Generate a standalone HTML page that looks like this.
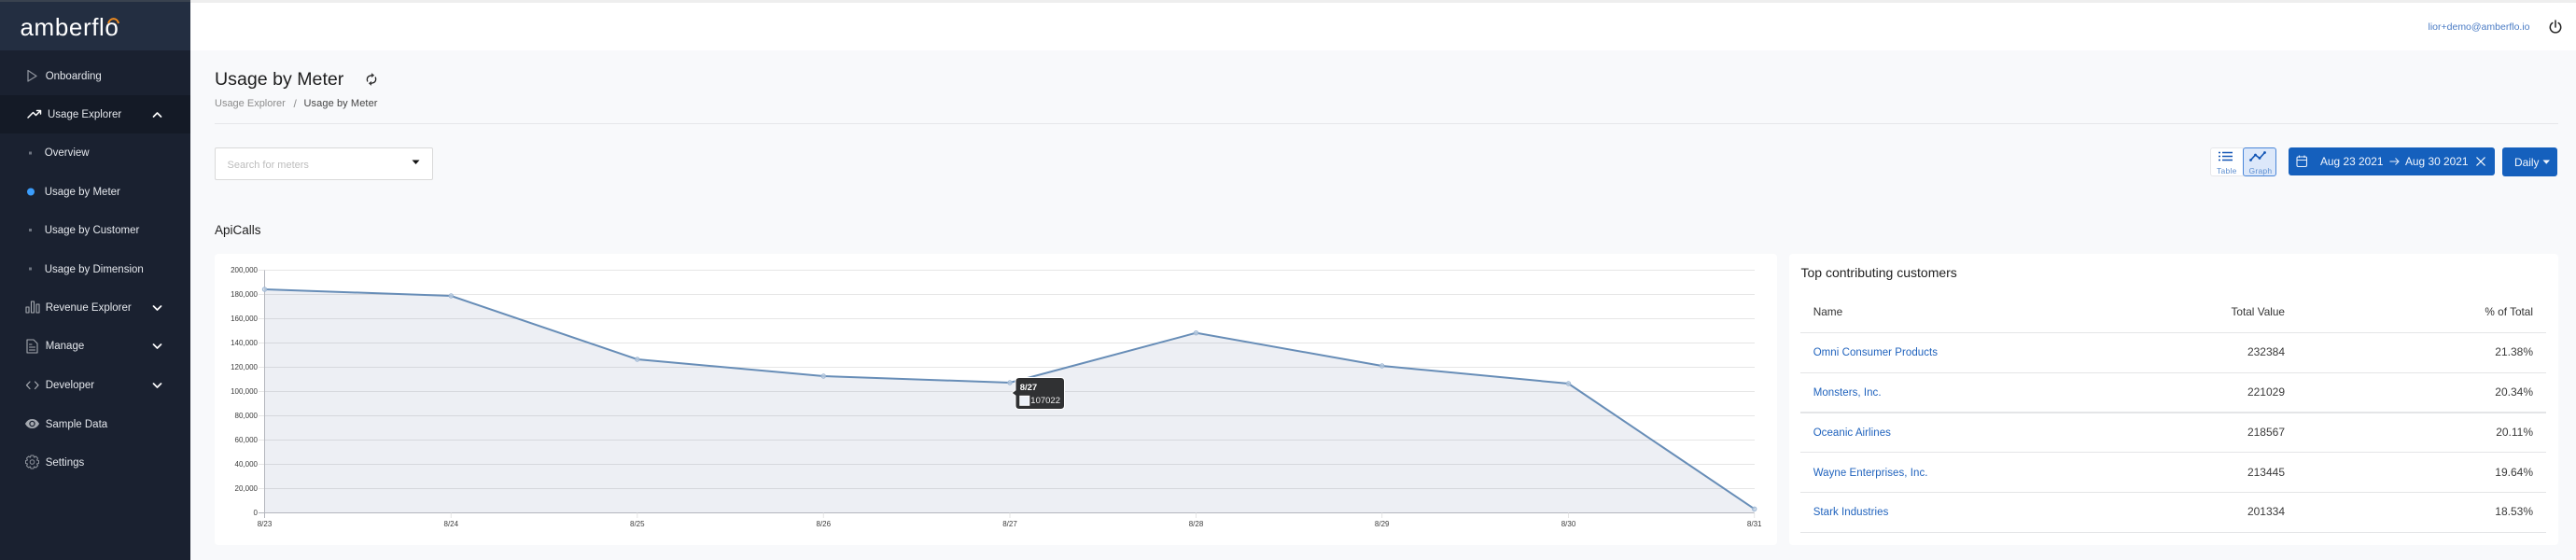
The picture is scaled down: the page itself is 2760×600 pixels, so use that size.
<!DOCTYPE html>
<html lang="en"><head><meta charset="utf-8"><title>Usage by Meter</title>
<style>
*{box-sizing:border-box}
html,body{margin:0;padding:0;width:2760px;height:600px;overflow:hidden;background:#f8f9fb;font-family:"Liberation Sans",sans-serif}
.a{position:absolute}
.t{position:absolute;white-space:nowrap;line-height:16px;height:16px}
.nav{font-size:11.5px;color:#e4e7ec;margin-top:1px}
.r{text-align:right}
.lnk{font-size:11.5px;color:#1f62bd;letter-spacing:.05px;margin-top:1px}
.num{font-size:12px;color:#3a3a3a}
.th{font-size:11.8px;color:#333}
.ln{position:absolute;left:1929px;width:799px;height:1px;background:#e4e5e7}
svg{position:absolute;overflow:visible}
</style></head><body>
<div class="a" style="left:204px;top:0;width:2556px;height:54px;background:#fff;border-top:3px solid #eeeeee"></div>
<div class="a" style="left:0;top:0;width:204px;height:600px;background:#1a2130"></div>
<div class="a" style="left:0;top:0;width:204px;height:54px;background:#232e41;border-top:2px solid #39424f"></div>
<div class="a" style="left:0;top:102px;width:204px;height:41px;background:#141a26"></div>

<div class="t" style="left:21.500px;top:14px;height:30px;line-height:30px;font-size:26px;color:#fff;letter-spacing:.6px">amberflo</div>
<svg style="left:0;top:0" width="204" height="54"><path d="M116 25C118 18.500 125.500 18.500 127 25" fill="none" stroke="#f28c1e" stroke-width="2"/></svg>

<svg style="left:0;top:0" width="204" height="600" fill="none" stroke-linejoin="round" stroke-linecap="round">
<path d="M30 75.500L39 81.500L30 87Z" stroke="#8d929b" stroke-width="1.300"/>
<path d="M30 126L35.500 120.500L38.500 123.500L43.500 118.500M39.500 118.500H43.500V122" stroke="#fff" stroke-width="1.500"/>
<path d="M164.500 125L168.500 121L172.500 125" stroke="#fff" stroke-width="1.700"/>
<rect x="31" y="162.500" width="3" height="3" fill="#6d7480"/>
<circle cx="33" cy="205.500" r="4" fill="#3b9dfb"/>
<rect x="31" y="245" width="3" height="3" fill="#6d7480"/>
<rect x="31" y="286.500" width="3" height="3" fill="#6d7480"/>
<g stroke="#a5a9b0" stroke-width="1.100"><rect x="28" y="329" width="3" height="6"/><rect x="33.500" y="323" width="3" height="12"/><rect x="39" y="326" width="3" height="9"/></g>
<path d="M164.500 328L168.500 332L172.500 328M164.500 369L168.500 373L172.500 369M164.500 411L168.500 415L172.500 411" stroke="#fff" stroke-width="1.700"/>
<path d="M29 364H36L40 368V378H29ZM31.500 369H34M31.500 372H37.500M31.500 375H37.500" stroke="#a5a9b0" stroke-width="1.100"/>
<path d="M32 409L28.500 412.700L32 416.500M37.500 409L41 412.700L37.500 416.500" stroke="#a5a9b0" stroke-width="1.200"/>
<path d="M27.500 454C31 448 38 448 41.500 454C38 460 31 460 27.500 454Z" fill="#a5a9b0" stroke="#a5a9b0" stroke-width="1"/>
<circle cx="34.500" cy="454" r="2.600" fill="#a5a9b0" stroke="#1a2130" stroke-width="1.300"/>
<circle cx="34.500" cy="495" r="2.300" stroke="#8d929b" stroke-width="1"/>
<path d="M33 488H36L36.500 490L38.500 489L40.500 491L39.500 493L41.500 493.500V496.500L39.500 497L40.500 499L38.500 501L36.500 500L36 502H33L32.500 500L30.500 501L28.500 499L29.500 497L27.500 496.500V493.500L29.500 493L28.500 491L30.500 489L32.500 490Z" stroke="#8d929b" stroke-width="1"/>
</svg>

<div class="t nav" style="left:48.700px;top:73px">Onboarding</div>
<div class="t nav" style="left:51px;top:114px">Usage Explorer</div>
<div class="t nav" style="left:47.700px;top:155px">Overview</div>
<div class="t nav" style="left:47.700px;top:197px">Usage by Meter</div>
<div class="t nav" style="left:47.700px;top:238px">Usage by Customer</div>
<div class="t nav" style="left:47.700px;top:280px">Usage by Dimension</div>
<div class="t nav" style="left:48.700px;top:321px">Revenue Explorer</div>
<div class="t nav" style="left:48.700px;top:362px">Manage</div>
<div class="t nav" style="left:48.700px;top:404px">Developer</div>
<div class="t nav" style="left:48.700px;top:446px">Sample Data</div>
<div class="t nav" style="left:48.700px;top:487px">Settings</div>

<div class="t" style="left:2601.500px;top:20.500px;font-size:10.500px;color:#4a7bc4">lior+demo@amberflo.io</div>
<svg style="left:2728px;top:18px" width="20" height="20" fill="none" stroke="#222" stroke-width="1.500" stroke-linecap="round"><path d="M10 4V11"/><path d="M6.800 6.500A5.700 5.700 0 1 0 13.200 6.500"/></svg>

<div class="t" style="left:230px;top:73px;height:24px;line-height:24px;font-size:19.600px;color:#1d1d1d">Usage by Meter</div>
<svg style="left:392px;top:78px" width="12" height="14" fill="none" stroke="#222" stroke-width="1.300"><path d="M2 9.500A4.200 4.200 0 0 1 3.500 3.500L7 2.500"/><path d="M10 4.500A4.200 4.200 0 0 1 8.500 10.500L5 11.500"/><path d="M6 .8L8.300 2.700L6 4.500M6 9.500L3.700 11.300L6 13.200" stroke-width="1"/></svg>
<div class="t" style="left:230px;top:103px;font-size:11px;color:#8c8c8c">Usage Explorer</div>
<div class="t" style="left:314.500px;top:103px;font-size:12px;color:#8c8c8c">/</div>
<div class="t" style="left:325.500px;top:103px;font-size:11px;color:#444;letter-spacing:.1px">Usage by Meter</div>
<div class="a" style="left:230px;top:132px;width:2511px;height:1px;background:#e6e7ea"></div>

<div class="a" style="left:230px;top:158px;width:234px;height:35px;background:#fff;border:1px solid #d9d9d9;border-radius:2px"></div>
<div class="t" style="left:243.500px;top:168.500px;font-size:11px;color:#bdbdbd">Search for meters</div>
<svg style="left:441px;top:171px" width="9" height="6"><path d="M0.500 0.500H8.500L4.500 5Z" fill="#111"/></svg>

<div class="a" style="left:2368px;top:158px;width:36px;height:31px;background:#fff;border:1px solid #e6e7ea;border-radius:3px 0 0 3px"></div>
<div class="a" style="left:2403px;top:158px;width:36px;height:31px;background:#dce8fa;border:1px solid #4a86d8;border-radius:3px"></div>
<svg style="left:2370px;top:160px" width="66" height="16" fill="none"><path d="M7 3.500H9M11 3.500H22M7 7.500H9M11 7.500H22M7 11.500H9M11 11.500H22" stroke="#1255b5" stroke-width="1.600"/><path d="M41.500 11.500L46.500 6L51 9.500L56.500 3.500" stroke="#1255b5" stroke-width="1.600"/><circle cx="41.500" cy="11.500" r="1.400" fill="#1255b5"/><circle cx="46.500" cy="6" r="1.400" fill="#1255b5"/><circle cx="51" cy="9.500" r="1.400" fill="#1255b5"/><circle cx="56.500" cy="3.500" r="1.400" fill="#1255b5"/></svg>
<div class="t" style="left:2375px;top:175px;height:16px;font-size:8.500px;color:#5d8fd0;letter-spacing:.25px">Table</div>
<div class="t" style="left:2409.500px;top:175px;height:16px;font-size:8.500px;color:#5d8fd0;letter-spacing:.25px">Graph</div>

<div class="a" style="left:2452px;top:158px;width:221px;height:30px;background:#1560bd;border-radius:3px"></div>
<svg style="left:2460px;top:166px" width="13" height="14" fill="none" stroke="#e7eefb" stroke-width="1.100"><rect x="1" y="2" width="10.500" height="10.500" rx="1.500"/><path d="M1 5.500H11.500M3.500 .5V3M9 .5V3"/></svg>
<div class="t" style="left:2486px;top:165px;font-size:11.900px;color:#f2f6fd">Aug 23 2021</div>
<svg style="left:2560px;top:167px" width="11" height="12" fill="none" stroke="#e7eefb" stroke-width="1"><path d="M0.500 6H10M6.500 2.500L10 6L6.500 9.500"/></svg>
<div class="t" style="left:2577px;top:165px;font-size:11.900px;color:#f2f6fd">Aug 30 2021</div>
<svg style="left:2653px;top:168px" width="10" height="10" fill="none" stroke="#fff" stroke-width="1.200"><path d="M.5 .5L9.500 9.500M9.500 .5L.5 9.500"/></svg>
<div class="a" style="left:2680.700px;top:158px;width:59px;height:30.500px;background:#1560bd;border-radius:3px"></div>
<div class="t" style="left:2694px;top:166px;font-size:11.900px;color:#f2f6fd">Daily</div>
<svg style="left:2724px;top:171px" width="9" height="6"><path d="M.5 .5H8L4.250 4.800Z" fill="#f2f6fd"/></svg>

<div class="t" style="left:230px;top:239px;font-size:13.500px;color:#1d1d1d">ApiCalls</div>

<div class="a" style="left:230px;top:272px;width:1674px;height:311.500px;background:#fff;border-radius:4px"></div>
<div class="a" style="left:1916.500px;top:272px;width:824px;height:311.500px;background:#fff;border-radius:4px"></div>

<svg style="left:0;top:0" width="2760" height="600" font-family="Liberation Sans" font-size="8px" fill="#3c3c3c">
<g stroke="#e6e6e6" stroke-width="1">
<path d="M277 289.500H1880M277 315.500H1880M277 341.500H1880M277 367.500H1880M277 393.500H1880M277 419.500H1880M277 445.500H1880M277 471.500H1880M277 497.500H1880M277 523.500H1880"/>
</g>
<path d="M283.500 310L483.300 317L682.800 385L882.300 403L1082 410L1281.500 356.700L1480.700 392L1680.500 411L1879.700 545.300V549.500H283.500Z" fill="#3c4f82" fill-opacity=".09"/>
<path d="M283.500 289.500V555M277 549.500H1880" stroke="#b4b6bd" stroke-width="1" fill="none"/>
<path d="M483.300 549.500V555M682.800 549.500V555M882.300 549.500V555M1082 549.500V555M1281.500 549.500V555M1480.700 549.500V555M1680.500 549.500V555M1879.700 549.500V555" stroke="#e6e6e6" fill="none"/>
<path d="M283.500 310L483.300 317L682.800 385L882.300 403L1082 410L1281.500 356.700L1480.700 392L1680.500 411L1879.700 545.300" fill="none" stroke="#678db7" stroke-width="2"/>
<g fill="#c7d5e6" fill-opacity=".7" stroke="#9ab4d2" stroke-width="1">
<circle cx="283.500" cy="310" r="2.200"/><circle cx="483.300" cy="317" r="2.200"/><circle cx="682.800" cy="385" r="2.200"/><circle cx="882.300" cy="403" r="2.200"/><circle cx="1082" cy="410" r="2.200"/><circle cx="1281.500" cy="356.700" r="2.200"/><circle cx="1480.700" cy="392" r="2.200"/><circle cx="1680.500" cy="411" r="2.200"/><circle cx="1879.700" cy="545.300" r="2.200"/>
</g>
<g text-anchor="end">
<text x="276" y="292">200,000</text><text x="276" y="318">180,000</text><text x="276" y="344">160,000</text><text x="276" y="370">140,000</text><text x="276" y="396">120,000</text><text x="276" y="422">100,000</text><text x="276" y="448">80,000</text><text x="276" y="474">60,000</text><text x="276" y="500">40,000</text><text x="276" y="526">20,000</text><text x="276" y="552">0</text>
</g>
<g text-anchor="middle">
<text x="283.500" y="564">8/23</text><text x="483.300" y="564">8/24</text><text x="682.800" y="564">8/25</text><text x="882.300" y="564">8/26</text><text x="1082" y="564">8/27</text><text x="1281.500" y="564">8/28</text><text x="1480.700" y="564">8/29</text><text x="1680.500" y="564">8/30</text><text x="1879.700" y="564">8/31</text>
</g>
<path d="M1088 408.500Q1088 404.500 1092 404.500H1136.500Q1140.500 404.500 1140.500 408.500V434.500Q1140.500 438.500 1136.500 438.500H1092Q1088 438.500 1088 434.500V424L1084 421L1088 418Z" fill="#303133" stroke="#fff" stroke-width="1"/>
<text x="1092.700" y="418" font-size="9.500" font-weight="700" fill="#fff">8/27</text>
<rect x="1092.800" y="424.300" width="10" height="10" fill="#edf1f8" stroke="#fff" stroke-width="1"/>
<text x="1104.300" y="432" font-size="9.500" fill="#eee">107022</text>
</svg>

<div class="t" style="left:1929.500px;top:283px;height:18px;line-height:18px;font-size:14px;color:#222">Top contributing customers</div>
<div class="t th" style="left:1942.700px;top:326px">Name</div>
<div class="t th r" style="left:2348px;width:100px;top:326px">Total Value</div>
<div class="t th r" style="left:2614px;width:100px;top:326px">% of Total</div>
<div class="ln" style="top:355.500px;height:1.500px"></div>
<div class="ln" style="top:398.500px;height:1.500px"></div>
<div class="ln" style="top:441px;height:1.500px"></div>
<div class="ln" style="top:484px"></div>
<div class="ln" style="top:527px"></div>
<div class="ln" style="top:570px"></div>

<div class="t lnk" style="left:1942.700px;top:369px">Omni Consumer Products</div>
<div class="t lnk" style="left:1942.700px;top:412px">Monsters, Inc.</div>
<div class="t lnk" style="left:1942.700px;top:455px">Oceanic Airlines</div>
<div class="t lnk" style="left:1942.700px;top:498px">Wayne Enterprises, Inc.</div>
<div class="t lnk" style="left:1942.700px;top:540px">Stark Industries</div>

<div class="t num r" style="left:2348px;width:100px;top:369px">232384</div>
<div class="t num r" style="left:2348px;width:100px;top:412px">221029</div>
<div class="t num r" style="left:2348px;width:100px;top:455px">218567</div>
<div class="t num r" style="left:2348px;width:100px;top:498px">213445</div>
<div class="t num r" style="left:2348px;width:100px;top:540px">201334</div>

<div class="t num r" style="left:2614px;width:100px;top:369px">21.38%</div>
<div class="t num r" style="left:2614px;width:100px;top:412px">20.34%</div>
<div class="t num r" style="left:2614px;width:100px;top:455px">20.11%</div>
<div class="t num r" style="left:2614px;width:100px;top:498px">19.64%</div>
<div class="t num r" style="left:2614px;width:100px;top:540px">18.53%</div>
</body></html>
